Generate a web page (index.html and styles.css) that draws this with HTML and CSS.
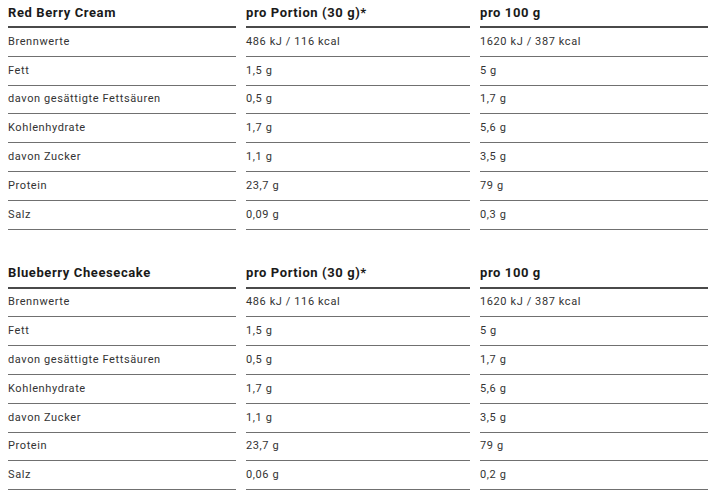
FILE: index.html
```html
<!DOCTYPE html>
<html lang="de">
<head>
<meta charset="utf-8">
<link rel="stylesheet" href="styles.css">
</head>
<body>
<section class="nutri">
  <div class="cell head">Red Berry Cream</div><div class="cell head">pro Portion (30 g)*</div><div class="cell head">pro 100 g</div>
  <div class="cell">Brennwerte</div><div class="cell">486 kJ / 116 kcal</div><div class="cell">1620 kJ / 387 kcal</div>
  <div class="cell">Fett</div><div class="cell">1,5 g</div><div class="cell">5 g</div>
  <div class="cell">davon gesättigte Fettsäuren</div><div class="cell">0,5 g</div><div class="cell">1,7 g</div>
  <div class="cell">Kohlenhydrate</div><div class="cell">1,7 g</div><div class="cell">5,6 g</div>
  <div class="cell">davon Zucker</div><div class="cell">1,1 g</div><div class="cell">3,5 g</div>
  <div class="cell">Protein</div><div class="cell">23,7 g</div><div class="cell">79 g</div>
  <div class="cell">Salz</div><div class="cell">0,09 g</div><div class="cell">0,3 g</div>
</section>
<section class="nutri">
  <div class="cell head">Blueberry Cheesecake</div><div class="cell head">pro Portion (30 g)*</div><div class="cell head">pro 100 g</div>
  <div class="cell">Brennwerte</div><div class="cell">486 kJ / 116 kcal</div><div class="cell">1620 kJ / 387 kcal</div>
  <div class="cell">Fett</div><div class="cell">1,5 g</div><div class="cell">5 g</div>
  <div class="cell">davon gesättigte Fettsäuren</div><div class="cell">0,5 g</div><div class="cell">1,7 g</div>
  <div class="cell">Kohlenhydrate</div><div class="cell">1,7 g</div><div class="cell">5,6 g</div>
  <div class="cell">davon Zucker</div><div class="cell">1,1 g</div><div class="cell">3,5 g</div>
  <div class="cell">Protein</div><div class="cell">23,7 g</div><div class="cell">79 g</div>
  <div class="cell">Salz</div><div class="cell">0,06 g</div><div class="cell">0,2 g</div>
</section>
</body>
</html>
```
FILE: styles.css
```css
* { box-sizing: border-box; }
html, body { margin: 0; padding: 0; background: #fff; }
body {
  padding: 0 8px;
  font-family: Roboto, "Liberation Sans", sans-serif;
  color: #333;
}
.nutri {
  display: grid;
  grid-template-columns: 228px 224px 228px;
  column-gap: 10px;
  margin-bottom: 31px;
}
.cell {
  height: 28.8px;
  display: flex;
  align-items: center;
  font-size: 11px;
  letter-spacing: 0.6px;
  border-bottom: 1px solid #707070;
  padding-bottom: 1px;
}
.head {
  height: 28px;
  font-size: 13px;
  font-weight: 700;
  color: #1a1a1a;
  letter-spacing: 0.6px;
  border-bottom: 2px solid #4a4a4a;
  padding-bottom: 2px;
}
```
